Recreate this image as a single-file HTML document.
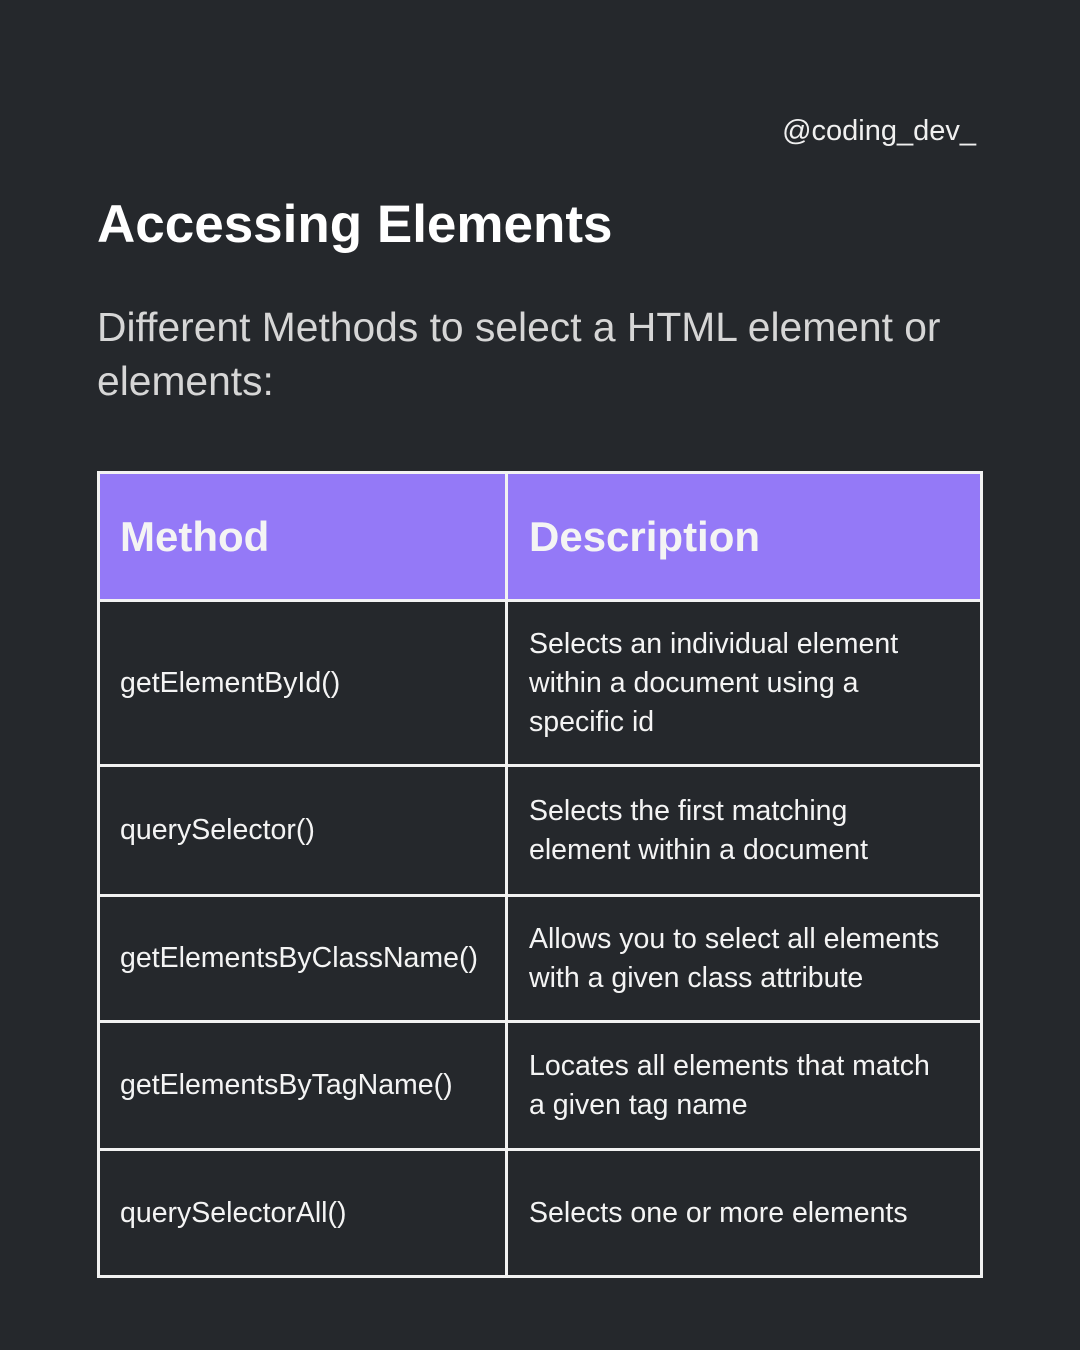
<!DOCTYPE html>
<html><head><meta charset="utf-8"><style>
body{margin:0;width:1080px;height:1350px;background:#25282c;font-family:"Liberation Sans",sans-serif;color:#fff;position:relative;overflow:hidden}
.a{position:absolute}
.hl{position:absolute;left:97px;width:886px;height:3px;background:#f2f2f2}
.vl{position:absolute;top:471px;height:807px;width:3px;background:#f2f2f2}
.c{position:absolute;display:flex;align-items:center;font-size:28.5px;line-height:39px;color:#f4f4f4;white-space:nowrap}
</style></head><body>
<div class="a" style="right:104px;top:115px;font-size:29px;color:#f0f0f0">@coding_dev_</div>
<div class="a" style="left:97px;top:194px;font-size:53px;font-weight:bold">Accessing Elements</div>
<div class="a" style="left:97px;top:300px;width:960px;font-size:40.8px;line-height:54px;color:#d6d6d6">Different Methods to select a HTML element or<br>elements:</div>
<div class="a" style="left:99px;top:474px;width:882px;height:125px;background:#9479f7"></div>
<div class="hl" style="top:471px"></div>
<div class="hl" style="top:599px"></div>
<div class="hl" style="top:764px"></div>
<div class="hl" style="top:894px"></div>
<div class="hl" style="top:1020px"></div>
<div class="hl" style="top:1148px"></div>
<div class="hl" style="top:1275px"></div>
<div class="vl" style="left:97px"></div>
<div class="vl" style="left:505px"></div>
<div class="vl" style="left:980px"></div>
<div class="c" style="left:120px;top:474px;height:125px;font-size:42px;font-weight:bold">Method</div>
<div class="c" style="left:529px;top:474px;height:125px;font-size:42px;font-weight:bold">Description</div>
<div class="c" style="left:120px;top:602px;height:162px">getElementById()</div>
<div class="c" style="left:529px;top:602px;height:162px">Selects an individual element<br>within a document using a<br>specific id</div>
<div class="c" style="left:120px;top:767px;height:127px">querySelector()</div>
<div class="c" style="left:529px;top:767px;height:127px">Selects the first matching<br>element within a document</div>
<div class="c" style="left:120px;top:897px;height:123px">getElementsByClassName()</div>
<div class="c" style="left:529px;top:897px;height:123px">Allows you to select all elements<br>with a given class attribute</div>
<div class="c" style="left:120px;top:1023px;height:125px">getElementsByTagName()</div>
<div class="c" style="left:529px;top:1023px;height:125px">Locates all elements that match<br>a given tag name</div>
<div class="c" style="left:120px;top:1151px;height:124px">querySelectorAll()</div>
<div class="c" style="left:529px;top:1151px;height:124px">Selects one or more elements</div>
</body></html>
